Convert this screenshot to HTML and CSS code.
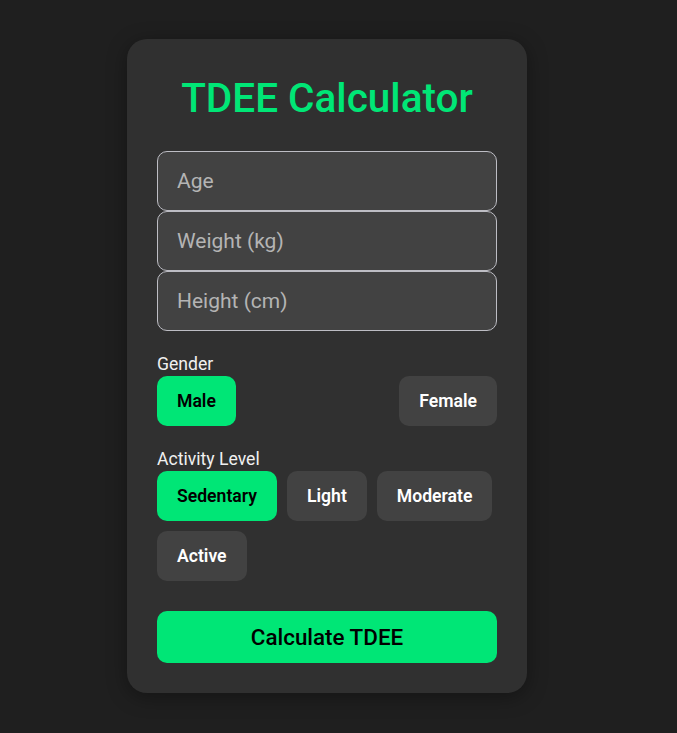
FILE: index.html
```html
<!DOCTYPE html>
<html lang="en">
<head>
<meta charset="utf-8">
<title>TDEE Calculator</title>
<link rel="stylesheet" href="styles.css">
</head>
<body>
<main class="page">
  <section class="card">
    <h1 class="title">TDEE Calculator</h1>
    <div class="fields">
      <input class="field" type="number" placeholder="Age">
      <input class="field" type="number" placeholder="Weight (kg)">
      <input class="field" type="number" placeholder="Height (cm)">
    </div>
    <div class="group">
      <label class="group-label">Gender</label>
      <div class="options options-split">
        <button class="option selected">Male</button>
        <button class="option">Female</button>
      </div>
    </div>
    <div class="group">
      <label class="group-label">Activity Level</label>
      <div class="options options-wrap">
        <button class="option selected">Sedentary</button>
        <button class="option">Light</button>
        <button class="option">Moderate</button>
        <button class="option">Active</button>
      </div>
    </div>
    <button class="calc">Calculate TDEE</button>
  </section>
</main>
</body>
</html>
```
FILE: styles.css
```css
* { box-sizing: border-box; }
html, body { margin: 0; padding: 0; }
body {
  background: #1f1f1f;
  font-family: Roboto, "Liberation Sans", sans-serif;
  color: #eeeeee;
}
.page {
  min-height: 100vh;
  display: flex;
  align-items: center;
  justify-content: center;
  padding: 0 23px 1px 0;
}
.card {
  width: 400px;
  padding: 30px;
  background: #303030;
  border-radius: 20px;
  box-shadow: 0 4px 20px rgba(0, 0, 0, 0.35);
  display: flex;
  flex-direction: column;
}
.title {
  margin: 5px 0 29px;
  text-align: center;
  color: #00e676;
  font-size: 40.5px;
  font-weight: 500;
  line-height: 48px;
}
.fields {
  display: flex;
  flex-direction: column;
}
.field {
  display: block;
  width: 100%;
  height: 60px;
  margin: 0;
  padding: 0 19px;
  border: 1px solid #bdbdc4;
  border-radius: 10px;
  background: #424242;
  color: #eeeeee;
  font-family: inherit;
  font-size: 21px;
  outline: none;
}
.field::placeholder { color: #b4b4b4; }
.group {
  margin-top: 23px;
  display: flex;
  flex-direction: column;
  gap: 1px;
}
.group-label {
  font-size: 17.6px;
  line-height: 21px;
  color: #f0f0f0;
}
.options {
  display: flex;
  gap: 10px;
}
.options-split { justify-content: space-between; }
.options-wrap { flex-wrap: wrap; }
.option {
  height: 50px;
  padding: 0 20px;
  border: none;
  border-radius: 10px;
  background: #424242;
  color: #ffffff;
  font-family: inherit;
  font-size: 17.6px;
  font-weight: 600;
}
.option.selected {
  background: #00e676;
  color: #000000;
}
.calc {
  margin-top: 30px;
  height: 52px;
  border: none;
  border-radius: 10px;
  background: #00e676;
  color: #000000;
  font-family: inherit;
  font-size: 22.4px;
  font-weight: 500;
}
```
